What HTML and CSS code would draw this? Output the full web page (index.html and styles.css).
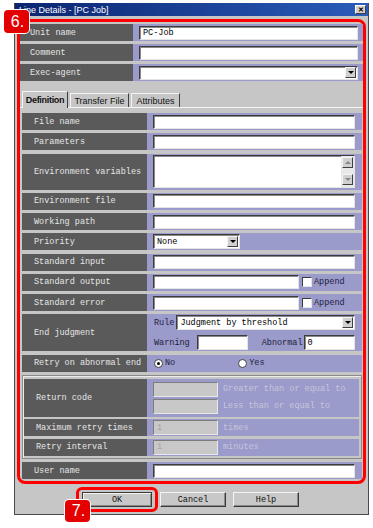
FILE: index.html
```html
<!DOCTYPE html>
<html lang="en">
<head>
    <meta charset="UTF-8">
    <title>Line Details - [PC Job]</title>
    <link rel="stylesheet" href="styles.css">
</head>
<body>
    <div class="window">
        <div class="titlebar">
            <span class="title">Line Details - [PC Job]</span>
            <span class="close">&#x2715;</span>
        </div>
        <div class="content">
            <div class="frame">
                <div class="top-rows">
                    <div class="row">
                        <div class="label">Unit name</div>
                        <div class="field"><div class="box">PC-Job</div></div>
                    </div>
                    <div class="row">
                        <div class="label">Comment</div>
                        <div class="field"><div class="box"></div></div>
                    </div>
                    <div class="row">
                        <div class="label">Exec-agent</div>
                        <div class="field"><div class="box select"><span class="dd"></span></div></div>
                    </div>
                </div>

                <div class="tabs">
                    <div class="tab active">Definition</div>
                    <div class="tab tab-transfer">Transfer File</div>
                    <div class="tab tab-attr">Attributes</div>
                </div>

                <div class="panel">
                    <div class="row">
                        <div class="label">File name</div>
                        <div class="field"><div class="box"></div></div>
                    </div>
                    <div class="row">
                        <div class="label">Parameters</div>
                        <div class="field"><div class="box"></div></div>
                    </div>
                    <div class="row tall">
                        <div class="label">Environment variables</div>
                        <div class="field">
                            <div class="box area">
                                <div class="scroll">
                                    <span class="sbtn"><span class="up"></span></span>
                                    <span class="sbtn"><span class="down"></span></span>
                                </div>
                            </div>
                        </div>
                    </div>
                    <div class="row">
                        <div class="label">Environment file</div>
                        <div class="field"><div class="box"></div></div>
                    </div>
                    <div class="row">
                        <div class="label">Working path</div>
                        <div class="field"><div class="box"></div></div>
                    </div>
                    <div class="row">
                        <div class="label">Priority</div>
                        <div class="field"><div class="box select priority">None<span class="dd"></span></div></div>
                    </div>
                    <div class="row">
                        <div class="label">Standard input</div>
                        <div class="field"><div class="box"></div></div>
                    </div>
                    <div class="row">
                        <div class="label">Standard output</div>
                        <div class="field">
                            <div class="box short"></div>
                            <span class="check"></span><span class="opt">Append</span>
                        </div>
                    </div>
                    <div class="row">
                        <div class="label">Standard error</div>
                        <div class="field">
                            <div class="box short"></div>
                            <span class="check"></span><span class="opt">Append</span>
                        </div>
                    </div>
                    <div class="row judge">
                        <div class="label">End judgment</div>
                        <div class="field stack">
                            <div class="line">
                                <span class="opt rule">Rule</span>
                                <div class="box select">Judgment by threshold<span class="dd"></span></div>
                            </div>
                            <div class="line">
                                <span class="opt warn">Warning</span>
                                <div class="box num"></div>
                                <span class="opt abn">Abnormal</span>
                                <div class="box num">0</div>
                            </div>
                        </div>
                    </div>
                    <div class="row">
                        <div class="label">Retry on abnormal end</div>
                        <div class="field">
                            <span class="radio on"></span><span class="opt">No</span>
                            <span class="radio yes"></span><span class="opt">Yes</span>
                        </div>
                    </div>

                    <div class="group">
                        <div class="row code">
                            <div class="label">Return code</div>
                            <div class="field stack">
                                <div class="line"><div class="box off"></div><span class="hint">Greater than or equal to</span></div>
                                <div class="line"><div class="box off"></div><span class="hint">Less than or equal to</span></div>
                            </div>
                        </div>
                        <div class="row">
                            <div class="label">Maximum retry times</div>
                            <div class="field"><div class="box off">1</div><span class="hint">times</span></div>
                        </div>
                        <div class="row">
                            <div class="label">Retry interval</div>
                            <div class="field"><div class="box off">1</div><span class="hint">minutes</span></div>
                        </div>
                    </div>

                    <div class="row">
                        <div class="label">User name</div>
                        <div class="field"><div class="box"></div></div>
                    </div>
                </div>
            </div>

            <div class="buttons">
                <span class="okwrap"><span class="btn ok">OK</span></span>
                <span class="btn cancel">Cancel</span>
                <span class="btn help">Help</span>
            </div>
        </div>
    </div>

    <div class="badge b6">6.</div>
    <div class="badge b7">7.</div>
</body>
</html>
```
FILE: styles.css
```css
* {
    box-sizing: border-box;
}
body {
    margin: 0;
    background: #fff;
    font-family: "Liberation Mono", monospace;
    font-size: 8.5px;
    position: relative;
    width: 373px;
    height: 528px;
    overflow: hidden;
}
.window {
    margin: 3px 0 0 14px;
    width: 355px;
    height: 512px;
    background-color: #c6c6c6;
    border: 1px solid #4a4a4a;
    border-top: none;
}
.titlebar {
    height: 13px;
    display: flex;
    align-items: center;
    justify-content: space-between;
    padding: 0 2px 0 4px;
    background: linear-gradient(90deg, #0b2570, #2a5cba);
    color: #fff;
    font-family: "Liberation Sans", sans-serif;
    font-size: 9px;
}
.close {
    width: 11px;
    height: 9px;
    display: flex;
    align-items: center;
    justify-content: center;
    background: #d4d0c8;
    color: #000;
    font-size: 7px;
    font-weight: bold;
    border: 1px solid;
    border-color: #fff #404040 #404040 #fff;
}
.content {
    padding: 3px 2px 0;
}
.frame {
    border: 3px solid #f00;
    border-radius: 8px;
    padding: 2px 0;
}
.top-rows {
    display: flex;
    flex-direction: column;
    gap: 3px;
}
.row {
    display: flex;
    height: 17px;
}
.label {
    flex: none;
    width: 113px;
    display: flex;
    align-items: center;
    padding-left: 10px;
    background-color: #5a5a5a;
    color: #e6e6e6;
    white-space: nowrap;
}
.field {
    flex: 1;
    display: flex;
    align-items: center;
    padding: 0 5px 0 6px;
    background-color: #9a9acb;
    color: #1e1e3c;
}
.box {
    flex: 1;
    height: 14px;
    display: flex;
    align-items: center;
    padding-left: 3px;
    background: #fff;
    color: #000;
    border: 1px solid;
    border-color: #3c3c3c #e4e4e4 #e4e4e4 #3c3c3c;
    box-shadow: inset 1px 1px 0 #8a8a8a;
    white-space: nowrap;
}
.select {
    padding-right: 1px;
}
.dd {
    width: 11px;
    height: 11px;
    margin-left: auto;
    display: flex;
    align-items: center;
    justify-content: center;
    background: #d0d0d0;
    border: 1px solid;
    border-color: #f4f4f4 #404040 #404040 #f4f4f4;
}
.dd::after {
    content: "";
    border-left: 3px solid transparent;
    border-right: 3px solid transparent;
    border-top: 3px solid #000;
}

/* tabs */
.tabs {
    display: flex;
    align-items: flex-end;
    gap: 2px;
    height: 17px;
    margin-top: 10px;
    padding-left: 2px;
    border-bottom: 1px solid #f4f4f4;
    font-family: "Liberation Sans", sans-serif;
    font-size: 9px;
}
.tab {
    height: 14px;
    display: flex;
    align-items: center;
    justify-content: center;
    border: 1px solid;
    border-bottom: none;
    border-color: #f4f4f4 #404040 transparent #f4f4f4;
    color: #111;
}
.tab.active {
    width: 46px;
    height: 17px;
    margin-bottom: -1px;
    background-color: #c6c6c6;
    font-weight: bold;
    letter-spacing: -0.3px;
}
.tab-transfer {
    width: 59px;
}
.tab-attr {
    width: 49px;
}

/* tab panel */
.panel {
    display: flex;
    flex-direction: column;
    gap: 3.25px;
    padding: 5px 1px 0 2px;
}
.panel .label {
    width: 125px;
    padding-left: 12px;
}
.panel .field {
    padding-right: 7px;
}
.row.tall {
    height: 36px;
}
.row.judge {
    height: 37px;
}
.area {
    height: 33px;
    align-items: stretch;
    justify-content: flex-end;
    padding: 0;
}
.scroll {
    width: 13px;
    display: flex;
    flex-direction: column;
    justify-content: space-between;
    padding: 1px 1px 2px;
    background: #e8e8e8;
}
.sbtn {
    height: 11px;
    display: flex;
    align-items: center;
    justify-content: center;
    background: #d0d0d0;
    border: 1px solid;
    border-color: #f4f4f4 #404040 #404040 #f4f4f4;
}
.up {
    border-left: 3px solid transparent;
    border-right: 3px solid transparent;
    border-bottom: 3px solid #888;
}
.down {
    border-left: 3px solid transparent;
    border-right: 3px solid transparent;
    border-top: 3px solid #888;
}
.priority {
    flex: none;
    width: 87px;
    height: 15px;
}
.short {
    flex: none;
    width: 146px;
}
.check {
    width: 10px;
    height: 10px;
    margin: 0 2px 0 3px;
    background: #fff;
    border: 1px solid;
    border-color: #3c3c3c #e4e4e4 #e4e4e4 #3c3c3c;
}
.stack {
    flex-direction: column;
    align-items: stretch;
    justify-content: center;
    gap: 5px;
}
.line {
    display: flex;
    align-items: center;
    height: 15px;
}
.line .box {
    height: 15px;
}
.rule {
    margin: 0 2px 0 1px;
}
.warn {
    margin: 0 7px 0 1px;
}
.line .num {
    flex: none;
    width: 51px;
}
.abn {
    margin: 0 1px 0 14px;
}
.radio {
    width: 9px;
    height: 9px;
    margin: 0 2px 0 1px;
    border-radius: 50%;
    background: #fff;
    border: 1px solid #404040;
    display: flex;
    align-items: center;
    justify-content: center;
}
.radio.on::after {
    content: "";
    width: 3px;
    height: 3px;
    border-radius: 50%;
    background: #000;
}
.radio.yes {
    margin-left: 63px;
}

/* disabled retry group */
.group {
    height: 84px;
    display: flex;
    flex-direction: column;
    gap: 2.5px;
    padding: 3px 2px 2px 1px;
    border: 1px solid #8a8a8a;
    box-shadow: inset 1px 1px 0 #ececec;
}
.group .label {
    width: 123px;
}
.group .stack {
    gap: 2px;
}
.row.code {
    height: 38px;
}
.box.off {
    flex: none;
    width: 65px;
    height: 15px;
    background: #c8c8c8;
    color: #a4a4a4;
    border-color: #7c7c7c #e8e8e8 #e8e8e8 #7c7c7c;
    box-shadow: none;
}
.hint {
    margin-left: 5px;
    color: #c6c6da;
    white-space: nowrap;
}

/* dialog buttons */
.buttons {
    display: flex;
    align-items: center;
    padding: 3px 0 0 59px;
}
.okwrap {
    display: flex;
    padding: 2px 3px;
    border: 3px solid #f00;
    border-radius: 6px;
}
.btn {
    width: 66px;
    height: 15px;
    display: flex;
    align-items: center;
    justify-content: center;
    background: #c8c8c8;
    color: #111;
    border: 1px solid;
    border-color: #f4f4f4 #3a3a3a #3a3a3a #f4f4f4;
    box-shadow: inset -1px -1px 0 #8a8a8a;
}
.btn.ok {
    width: 70px;
    border-color: #3a3a3a;
    box-shadow: inset 1px 1px 0 #f4f4f4, inset -1px -1px 0 #8a8a8a;
}
.cancel {
    margin-left: 2px;
}
.help {
    margin-left: 7px;
}

/* annotation badges */
.badge {
    position: absolute;
    width: 25px;
    height: 23px;
    display: flex;
    align-items: center;
    justify-content: center;
    padding-left: 2px;
    background: #e40000;
    color: #fff;
    font-family: "Liberation Sans", sans-serif;
    font-size: 16px;
    border-radius: 4px;
    box-shadow: 0 0 0 1px #fff;
}
.b6 {
    left: 4px;
    top: 10px;
}
.b7 {
    left: 65px;
    top: 500px;
    height: 22px;
}
```
